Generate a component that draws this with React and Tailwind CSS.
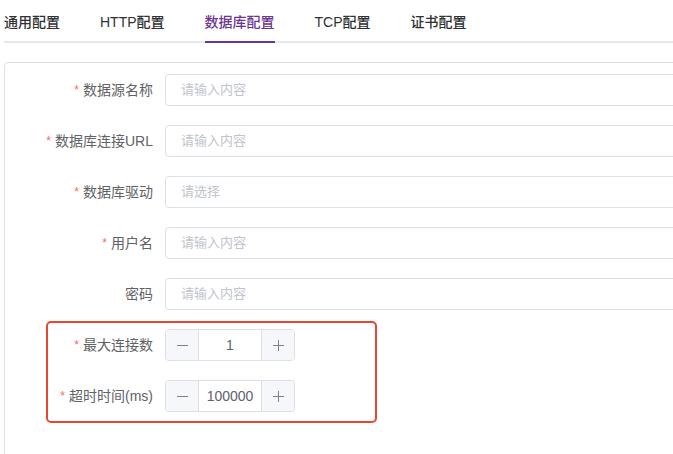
import React from 'react';

const font = { fontFamily: '"Liberation Sans", "Noto Sans CJK SC", sans-serif' };

const tabs = ['通用配置', 'HTTP配置', '数据库配置', 'TCP配置', '证书配置'];

function Label({ required, children }) {
  return (
    <div className="w-[160px] shrink-0 pr-3 text-right text-[14px] text-[#606266] leading-[32px]">
      {required && <span className="text-[#f56c6c] text-[12px] align-top mr-[4px]">*</span>}
      {children}
    </div>
  );
}

function TextRow({ label, required, placeholder = '请输入内容' }) {
  return (
    <div className="flex items-center h-[32px] mb-[19px]">
      <Label required={required}>{label}</Label>
      <div className="flex-1 h-[32px] border border-[#dcdfe6] rounded-[4px] pl-[15px] flex items-center text-[13px] text-[#c0c4cc]">
        {placeholder}
      </div>
    </div>
  );
}

function NumberRow({ label, value, last }) {
  return (
    <div className={'flex items-center h-[32px] ' + (last ? '' : 'mb-[19px]')}>
      <Label required>{label}</Label>
      <div className="w-[130px] h-[32px] border border-[#dcdfe6] rounded-[4px] flex overflow-hidden">
        <div className="w-[33px] bg-[#f5f7fa] border-r border-[#dcdfe6] flex items-center justify-center">
          <div className="w-[11px] h-px bg-[#808288]" />
        </div>
        <div className="flex-1 flex items-center justify-center text-[14px] text-[#606266]">{value}</div>
        <div className="w-[33px] bg-[#f5f7fa] border-l border-[#dcdfe6] flex items-center justify-center relative">
          <div className="w-[11px] h-px bg-[#808288]" />
          <div className="absolute w-px h-[11px] bg-[#808288]" />
        </div>
      </div>
    </div>
  );
}

export default function App() {
  return (
    <div className="w-[673px] h-[454px] overflow-hidden bg-white pl-1" style={font}>
      <div className="relative w-[760px]">
        <div className="flex h-[41px] items-center pt-[3px]">
          {tabs.map((t, i) => (
            <div
              key={t}
              className={
                'relative h-full flex items-center text-[14px] font-medium ' +
                (i === 0 ? 'pr-5 ' : 'px-5 ') +
                (i === 2 ? 'text-[#6d3590]' : 'text-[#303133]')
              }
            >
              {t}
              {i === 2 && <div className="absolute left-5 right-5 -bottom-[2px] h-[2px] bg-[#6d3590] z-10" />}
            </div>
          ))}
        </div>
        <div className="h-[2px] bg-[#e4e7ed]" />
      </div>
      <div className="mt-[19px] w-[760px] h-[420px] border border-[#dcdfe6] rounded-[4px] pt-[11px]">
        <TextRow label="数据源名称" required />
        <TextRow label="数据库连接URL" required />
        <TextRow label="数据库驱动" required placeholder="请选择" />
        <TextRow label="用户名" required />
        <TextRow label="密码" />
        <div className="relative">
          <NumberRow label="最大连接数" value="1" />
          <NumberRow label="超时时间(ms)" value="100000" last />
          <div className="absolute left-[41px] -top-[8px] w-[331px] h-[102px] border-2 border-[#e9452f] rounded-[5px]" />
        </div>
      </div>
    </div>
  );
}
